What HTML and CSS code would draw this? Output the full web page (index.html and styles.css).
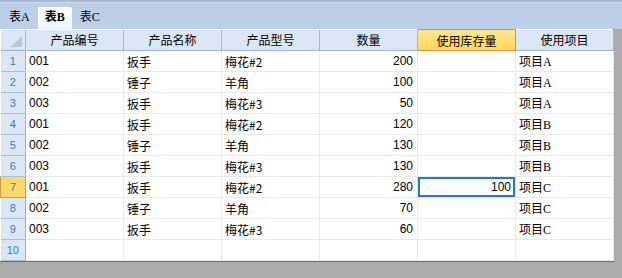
FILE: index.html
```html
<!DOCTYPE html>
<html lang="zh">
<head>
    <meta charset="UTF-8">
    <title>表B</title>
    <link rel="stylesheet" href="styles.css">
</head>
<body>
    <div class="tabs">
        <div class="tab">表A</div>
        <div class="tab active">表B</div>
        <div class="tab">表C</div>
    </div>

    <div class="sheet">
        <table class="grid">
            <colgroup>
                <col class="col-head">
                <col class="col"><col class="col"><col class="col">
                <col class="col"><col class="col"><col class="col">
            </colgroup>
            <thead>
                <tr>
                    <th class="corner"><span class="tri"></span></th>
                    <th>产品编号</th>
                    <th>产品名称</th>
                    <th>产品型号</th>
                    <th>数量</th>
                    <th class="hl">使用库存量</th>
                    <th>使用项目</th>
                </tr>
            </thead>
            <tbody id="rows"></tbody>
        </table>
    </div>

    <script>
        const data = [
            ['001', '扳手', '梅花#2', 200, '', '项目A'],
            ['002', '锤子', '羊角', 100, '', '项目A'],
            ['003', '扳手', '梅花#3', 50, '', '项目A'],
            ['001', '扳手', '梅花#2', 120, '', '项目B'],
            ['002', '锤子', '羊角', 130, '', '项目B'],
            ['003', '扳手', '梅花#3', 130, '', '项目B'],
            ['001', '扳手', '梅花#2', 280, 100, '项目C'],
            ['002', '锤子', '羊角', 70, '', '项目C'],
            ['003', '扳手', '梅花#3', 60, '', '项目C'],
            ['', '', '', '', '', '']
        ];
        const activeRow = 6;

        const tbody = document.getElementById('rows');
        data.forEach(function(row, i) {
            const tr = document.createElement('tr');
            const th = document.createElement('th');
            th.className = 'rownum' + (i === activeRow ? ' hl' : '');
            th.textContent = i + 1;
            tr.appendChild(th);

            row.forEach(function(value, j) {
                const td = document.createElement('td');
                td.textContent = value;
                if (j === 0) td.className = 'code';
                if (j === 3 || j === 4) td.className = 'num';
                if (j === 5) td.className = 'proj';
                if (i === activeRow && j === 4) td.className += ' selected';
                tr.appendChild(td);
            });
            tbody.appendChild(tr);
        });
    </script>
</body>
</html>
```

FILE: styles.css
```css
body {
    margin: 0;
    background: #ababab;
    font-family: "Noto Sans CJK SC", "Liberation Sans", sans-serif;
    font-size: 12px;
    color: #000;
}

.tabs {
    height: 26px;
    padding-top: 1px;
    background: #bccfe7;
    border-top: 2px solid #a7bbd6;
    box-shadow: inset 0 1px 0 #cad9ec;
    display: flex;
    align-items: flex-end;
    padding-left: 4px;
    gap: 3px;
}

.tab {
    height: 22px;
    line-height: 20px;
    padding: 0 5px;
    font-family: "Liberation Serif", "Noto Sans CJK SC", serif;
    font-size: 12px;
}

.tab.active {
    background: linear-gradient(to bottom, #ffffff, #eef4fb);
    font-weight: bold;
    padding: 0 7px 0 7px;
    border-radius: 2px 2px 0 0;
}

.sheet {
    width: 613px;
    background: #fff;
    border-right: 1px solid #6e6e6e;
    border-bottom: 1px solid #6e6e6e;
}

.grid {
    border-collapse: collapse;
    table-layout: fixed;
    width: 613px;
}

.col-head {
    width: 25px;
}

.col {
    width: 98px;
}

th, td {
    height: 20px;
    padding: 0;
    overflow: hidden;
    white-space: nowrap;
}

thead th {
    background: #dae6f4;
    font-weight: normal;
    font-size: 12px;
    border-right: 1px solid #a3b8d2;
    border-bottom: 1px solid #9db3cd;
    text-align: center;
}

thead th.hl {
    background: linear-gradient(to bottom, #ffe992, #ffd55a);
    border: 1px solid #c9993a;
}

.corner {
    position: relative;
}

.tri {
    position: absolute;
    right: 3px;
    bottom: 3px;
    width: 0;
    height: 0;
    border-left: 11px solid transparent;
    border-bottom: 11px solid #b6c6d9;
}

th.rownum {
    background: #dae6f4;
    color: #3d79b8;
    font-family: "Liberation Sans", sans-serif;
    font-weight: normal;
    font-size: 11px;
    text-align: center;
    border-right: 1px solid #9db3cd;
    border-bottom: 1px solid #a9bdd5;
}

th.rownum.hl {
    background: #ffd966;
    border: 1px solid #d49b3a;
}

td {
    border-right: 1px solid #e9e9e9;
    border-bottom: 1px solid #e9e9e9;
    padding-left: 3px;
}

td.code {
    font-family: "Liberation Sans", sans-serif;
    font-size: 12px;
}

td.num {
    font-family: "Liberation Sans", sans-serif;
    font-size: 12px;
    text-align: right;
    padding: 0 4px 0 0;
}

td.proj {
    font-family: "Liberation Serif", "Noto Sans CJK SC", serif;
}

td.selected {
    box-shadow: inset 0 0 0 2px #1d7ad4;
}
```
